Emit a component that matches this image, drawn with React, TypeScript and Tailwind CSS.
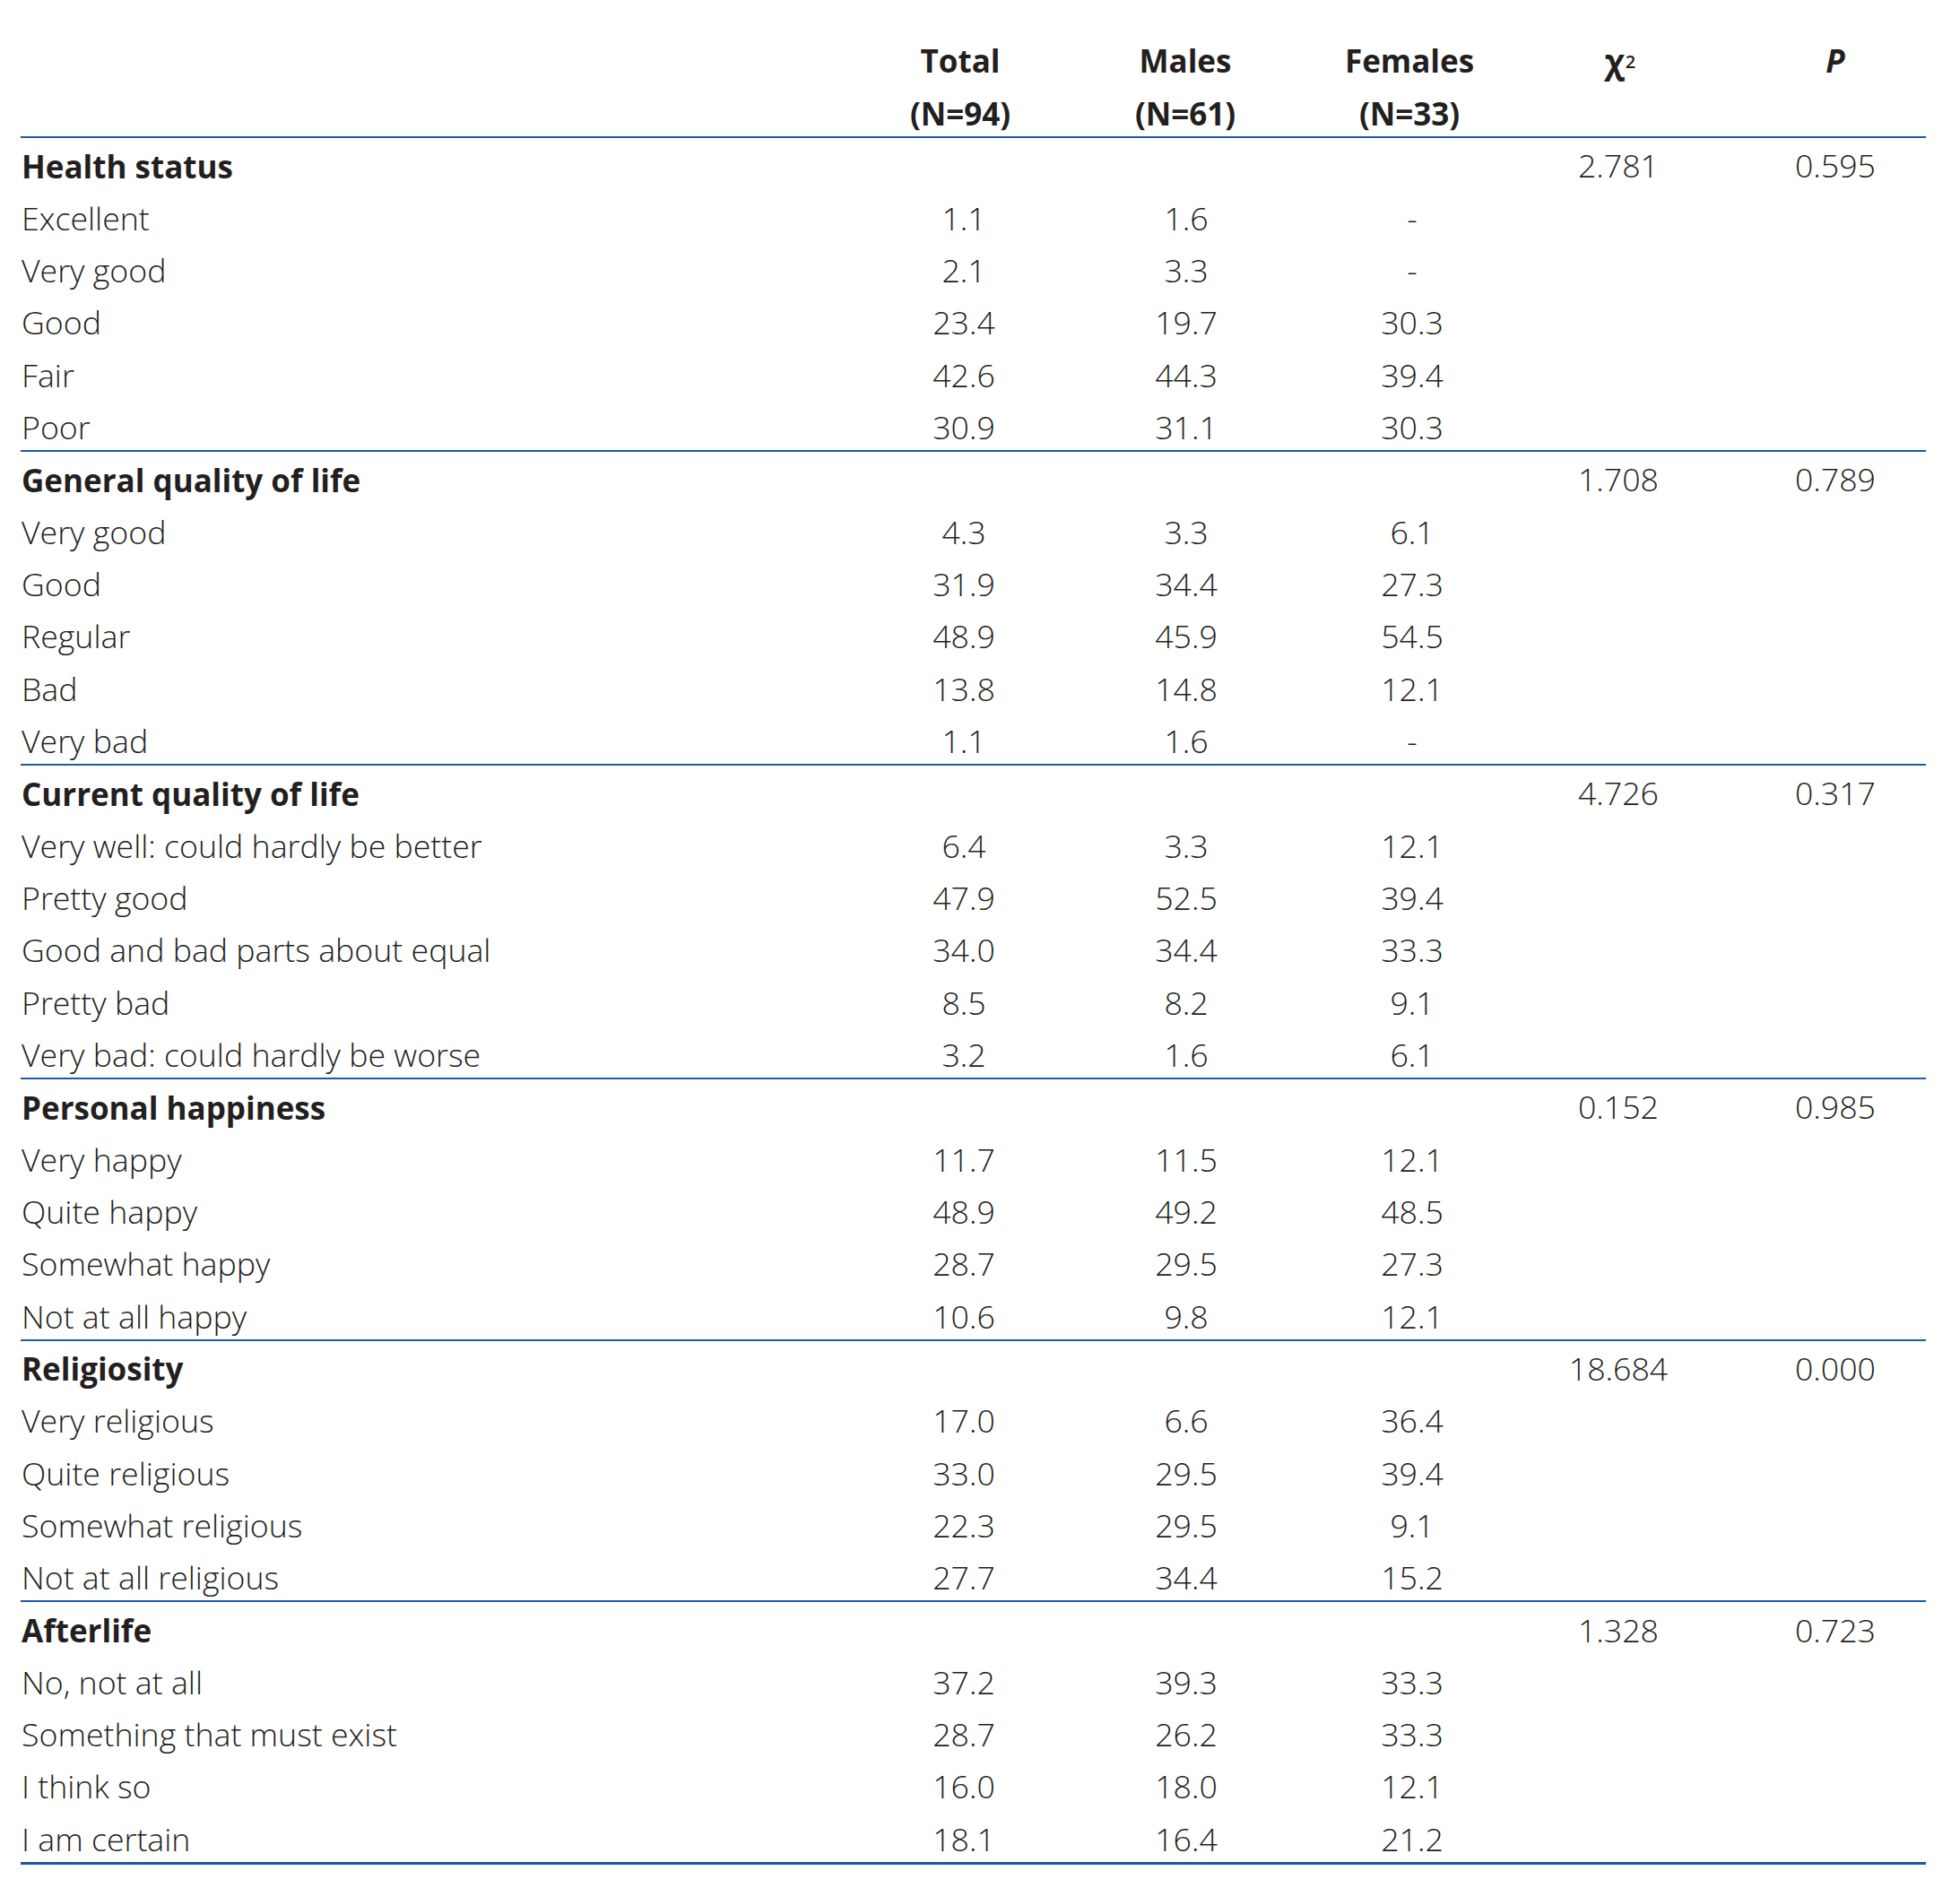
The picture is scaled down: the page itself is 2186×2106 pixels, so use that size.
import React from "react"

type Row = { label: string; total: string; males: string; females: string }
type Group = { title: string; chi: string; p: string; rows: Row[] }

const groups: Group[] = [
  {
    title: "Health status",
    chi: "2.781",
    p: "0.595",
    rows: [
      { label: "Excellent", total: "1.1", males: "1.6", females: "-" },
      { label: "Very good", total: "2.1", males: "3.3", females: "-" },
      { label: "Good", total: "23.4", males: "19.7", females: "30.3" },
      { label: "Fair", total: "42.6", males: "44.3", females: "39.4" },
      { label: "Poor", total: "30.9", males: "31.1", females: "30.3" },
    ],
  },
  {
    title: "General quality of life",
    chi: "1.708",
    p: "0.789",
    rows: [
      { label: "Very good", total: "4.3", males: "3.3", females: "6.1" },
      { label: "Good", total: "31.9", males: "34.4", females: "27.3" },
      { label: "Regular", total: "48.9", males: "45.9", females: "54.5" },
      { label: "Bad", total: "13.8", males: "14.8", females: "12.1" },
      { label: "Very bad", total: "1.1", males: "1.6", females: "-" },
    ],
  },
  {
    title: "Current quality of life",
    chi: "4.726",
    p: "0.317",
    rows: [
      { label: "Very well: could hardly be better", total: "6.4", males: "3.3", females: "12.1" },
      { label: "Pretty good", total: "47.9", males: "52.5", females: "39.4" },
      { label: "Good and bad parts about equal", total: "34.0", males: "34.4", females: "33.3" },
      { label: "Pretty bad", total: "8.5", males: "8.2", females: "9.1" },
      { label: "Very bad: could hardly be worse", total: "3.2", males: "1.6", females: "6.1" },
    ],
  },
  {
    title: "Personal happiness",
    chi: "0.152",
    p: "0.985",
    rows: [
      { label: "Very happy", total: "11.7", males: "11.5", females: "12.1" },
      { label: "Quite happy", total: "48.9", males: "49.2", females: "48.5" },
      { label: "Somewhat happy", total: "28.7", males: "29.5", females: "27.3" },
      { label: "Not at all happy", total: "10.6", males: "9.8", females: "12.1" },
    ],
  },
  {
    title: "Religiosity",
    chi: "18.684",
    p: "0.000",
    rows: [
      { label: "Very religious", total: "17.0", males: "6.6", females: "36.4" },
      { label: "Quite religious", total: "33.0", males: "29.5", females: "39.4" },
      { label: "Somewhat religious", total: "22.3", males: "29.5", females: "9.1" },
      { label: "Not at all religious", total: "27.7", males: "34.4", females: "15.2" },
    ],
  },
  {
    title: "Afterlife",
    chi: "1.328",
    p: "0.723",
    rows: [
      { label: "No, not at all", total: "37.2", males: "39.3", females: "33.3" },
      { label: "Something that must exist", total: "28.7", males: "26.2", females: "33.3" },
      { label: "I think so", total: "16.0", males: "18.0", females: "12.1" },
      { label: "I am certain", total: "18.1", males: "16.4", females: "21.2" },
    ],
  },
]

const cols = "grid grid-cols-[923px_250px_252px_248px_218px_234px]"

function Cells({ a, b, c, d, e, f, bold }: { a: React.ReactNode; b?: string; c?: string; d?: string; e?: string; f?: string; bold?: boolean }) {
  return (
    <>
      <div className={`pl-[1px] ${bold ? "font-bold" : "font-light text-[35.7px]"}`}>{a}</div>
      <div className="text-center pl-[8px] font-light text-[35.7px]">{b}</div>
      <div className="text-center pl-[2px] font-light text-[35.7px]">{c}</div>
      <div className="text-center pl-[6px] font-light text-[35.7px]">{d}</div>
      <div className="text-center font-light text-[35.7px]">{e}</div>
      <div className="text-center pl-[32px] font-light text-[35.7px]">{f}</div>
    </>
  )
}

export default function App() {
  return (
    <div
      className="min-h-[2106px] w-[2186px] bg-white text-[#231f20] text-[35px]"
      style={{ fontFamily: '"Open Sans", "Noto Sans", sans-serif' }}
    >
      <div className="pl-[23px] w-[2148px]">
        {/* header */}
        <div className={`${cols} h-[152px] items-start pt-[38px] leading-[59px] font-bold`}>
          <div />
          <div className="text-center">
            Total
            <br />
            (N=94)
          </div>
          <div className="text-center">
            Males
            <br />
            (N=61)
          </div>
          <div className="text-center">
            Females
            <br />
            (N=33)
          </div>
          <div className="text-center pl-[4px]">
            <span className="text-[37px]">χ</span>
            <sup className="text-[20px] font-semibold relative -top-[6px] ml-[1px]">2</sup>
          </div>
          <div className="text-center pl-[32px] italic">P</div>
        </div>

        <div className="border-b-[3px] border-[#1b56a4]">
          {groups.map((g) => (
            <div key={g.title} className="border-t-[2px] border-[#1d5aa8]">
              <div className={`${cols} h-[56.33px] items-center pt-[6px] leading-none`}>
                <Cells a={g.title} e={g.chi} f={g.p} bold />
              </div>
              {g.rows.map((r, i) => (
                <div key={i} className={`${cols} h-[58.33px] items-center pt-[8px] leading-none`}>
                  <Cells a={r.label} b={r.total} c={r.males} d={r.females} />
                </div>
              ))}
            </div>
          ))}
        </div>
      </div>
    </div>
  )
}
